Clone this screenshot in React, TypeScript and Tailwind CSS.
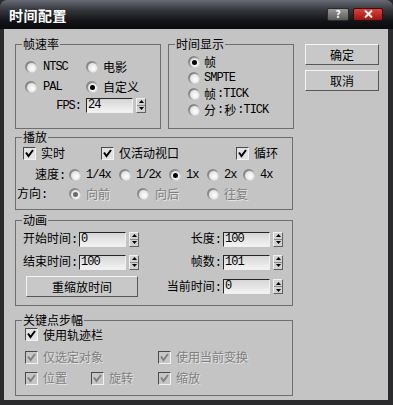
import type { ReactNode } from 'react'

const cjk = "font-['Noto_Sans_CJK_SC',sans-serif]"
const lat = "font-['Liberation_Mono',monospace] text-[12px] tracking-[-1px]"
const dim = 'text-[#7f7f7f] [text-shadow:1px_1px_0_#e4e4e4]'

function Lat({ children }: { children: ReactNode }) {
  return <span className={lat}>{children}</span>
}

function Radio({ on = false, off = false }: { on?: boolean; off?: boolean }) {
  return (
    <span className="flex h-[12px] w-[12px] shrink-0 items-center justify-center rounded-full bg-[linear-gradient(135deg,#6f6f6f,#9a9a9a_45%,#ffffff)]">
      <span className="flex h-[9px] w-[9px] items-center justify-center rounded-full bg-[radial-gradient(circle_at_60%_60%,#ffffff,#d4d4d4)]">
        {on ? <span className={`h-[5px] w-[5px] rounded-full ${off ? 'bg-[#6a6a6a]' : 'bg-black'}`} /> : null}
      </span>
    </span>
  )
}

function Check({ off = false }: { off?: boolean }) {
  return (
    <span
      className={`flex h-[13px] w-[13px] shrink-0 items-center justify-center border border-t-[#4a4a4a] border-l-[#4a4a4a] border-b-[#f2f2f2] border-r-[#f2f2f2] ${
        off ? 'bg-[#c6c6c6]' : 'bg-[#e2e2e2]'
      }`}
    >
      <svg width="9" height="9" viewBox="0 0 9 9">
        <path d="M1 3.5 L3.5 7 L8 1" fill="none" stroke={off ? '#808080' : '#000'} strokeWidth="2" />
      </svg>
    </span>
  )
}

function Field({ value, w }: { value: string; w: string }) {
  return (
    <span
      className={`flex h-[15px] ${w} items-center border border-t-[#262626] border-l-[#262626] border-b-[#efefef] border-r-[#efefef] bg-[linear-gradient(#d6d6d6,#f3f3f3)] pl-[1px] leading-[13px]`}
    >
      <Lat>{value}</Lat>
    </span>
  )
}

function Spin() {
  return (
    <span className="ml-[3px] flex h-[15px] w-[10px] flex-col border border-t-[#f0f0f0] border-l-[#f0f0f0] border-b-[#606060] border-r-[#606060] bg-[#d2d2d2]">
      <span className="flex flex-1 items-center justify-center border-b border-[#8a8a8a]">
        <svg width="5" height="3" viewBox="0 0 5 3">
          <path d="M2.5 0 L5 3 L0 3 Z" fill="#000" />
        </svg>
      </span>
      <span className="flex flex-1 items-center justify-center">
        <svg width="5" height="3" viewBox="0 0 5 3">
          <path d="M0 0 L5 0 L2.5 3 Z" fill="#000" />
        </svg>
      </span>
    </span>
  )
}

function Btn({ children, w }: { children: ReactNode; w: string }) {
  return (
    <span
      className={`flex h-[21px] ${w} items-center justify-center border border-t-[#f4f4f4] border-l-[#f4f4f4] border-b-[#585858] border-r-[#585858] bg-[#c8c8c8]`}
    >
      {children}
    </span>
  )
}

function Group({ title, className, children }: { title: string; className: string; children: ReactNode }) {
  return (
    <fieldset className={`shrink-0 border border-[#6f6f6f] ${className}`}>
      <legend className="ml-[6px] px-[1px] leading-[14px]">{title}</legend>
      {children}
    </fieldset>
  )
}

export default function App() {
  return (
    <div className={`h-[405px] w-[393px] overflow-hidden bg-[#2b2b2e] text-[12px] leading-[14px] text-black ${cjk}`}>
      <div className="flex h-[29px] items-center justify-between rounded-t-[7px] bg-[linear-gradient(#686b73,#34363c_35%,#111215_75%,#0b0b0e)] pl-[9px] pr-[10px]">
        <span className="text-[14px] font-bold tracking-[0.5px] text-white">时间配置</span>
        <div className="flex items-center gap-[4px] pb-[1px]">
          <span className="flex h-[13px] w-[22px] items-center justify-center rounded-[2px] border border-[#2c2c2c] bg-[linear-gradient(#9a9a9a,#5a5a5a)] text-[10px] font-bold leading-none text-white">
            ?
          </span>
          <span className="flex h-[13px] w-[30px] items-center justify-center rounded-[2px] border border-[#3a0a0a] bg-[linear-gradient(#e0413a,#9a1410)]">
            <svg width="9" height="8" viewBox="0 0 9 8">
              <path d="M1 0.5 L8 7.5 M8 0.5 L1 7.5" stroke="#fff" strokeWidth="2" />
            </svg>
          </span>
        </div>
      </div>

      <div className="ml-[4px] h-[371px] w-[384px] bg-[#c4c4c4] pl-[11px] pt-[8px]">
        <div className="flex items-start">
          <Group title="帧速率" className="h-[92px] w-[146px]">
            <div className="pl-[9px] pt-[6px]">
              <div className="flex h-[20px] items-center">
                <span className="flex w-[61px] items-center gap-[6px]">
                  <Radio />
                  <Lat>NTSC</Lat>
                </span>
                <span className="flex items-center gap-[5px]">
                  <Radio />
                  电影
                </span>
              </div>
              <div className="flex h-[20px] items-center">
                <span className="flex w-[61px] items-center gap-[6px]">
                  <Radio />
                  <Lat>PAL</Lat>
                </span>
                <span className="flex items-center gap-[5px]">
                  <Radio on />
                  自定义
                </span>
              </div>
              <div className="flex h-[16px] items-center">
                <span className="w-[61px] pr-[5px] text-right">
                  <Lat>FPS:</Lat>
                </span>
                <Field value="24" w="w-[47px]" />
                <Spin />
              </div>
            </div>
          </Group>

          <Group title="时间显示" className="ml-[7px] h-[92px] w-[126px]">
            <div className="pl-[19px] pt-[3px]">
              <div className="flex h-[16px] items-center gap-[4px]">
                <Radio on />
                帧
              </div>
              <div className="flex h-[16px] items-center gap-[4px]">
                <Radio />
                <Lat>SMPTE</Lat>
              </div>
              <div className="flex h-[16px] items-center gap-[4px]">
                <Radio />
                <span className="flex items-center gap-[1px]">
                  <span>帧</span>
                  <Lat>:TICK</Lat>
                </span>
              </div>
              <div className="flex h-[16px] items-center gap-[4px]">
                <Radio />
                <span className="flex items-center gap-[1px]">
                  <span>分</span>
                  <Lat>:</Lat>
                  <span>秒</span>
                  <Lat>:TICK</Lat>
                </span>
              </div>
            </div>
          </Group>

          <div className="ml-[11px] mt-[7px] flex flex-col gap-[5px]">
            <Btn w="w-[74px]">确定</Btn>
            <Btn w="w-[74px]">取消</Btn>
          </div>
        </div>

        <Group title="播放" className="mt-[1px] h-[80px] w-[278px]">
          <div className="flex h-[18px] items-center pl-[7px]">
            <span className="flex w-[78px] items-center gap-[5px]">
              <Check />
              实时
            </span>
            <span className="flex w-[135px] items-center gap-[5px]">
              <Check />
              仅活动视口
            </span>
            <span className="flex items-center gap-[5px]">
              <Check />
              循环
            </span>
          </div>
          <div className="mt-[3px] flex h-[20px] items-center pl-[19px]">
            <span className="w-[34px]">
              速度<Lat>:</Lat>
            </span>
            <span className="flex w-[50px] items-center gap-[5px]">
              <Radio />
              <Lat>1/4x</Lat>
            </span>
            <span className="flex w-[50px] items-center gap-[5px]">
              <Radio />
              <Lat>1/2x</Lat>
            </span>
            <span className="flex w-[38px] items-center gap-[5px]">
              <Radio on />
              <Lat>1x</Lat>
            </span>
            <span className="flex w-[36px] items-center gap-[5px]">
              <Radio />
              <Lat>2x</Lat>
            </span>
            <span className="flex items-center gap-[5px]">
              <Radio />
              <Lat>4x</Lat>
            </span>
          </div>
          <div className="flex h-[18px] items-center pl-[1px]">
            <span className="w-[52px]">
              方向<Lat>:</Lat>
            </span>
            <span className={`flex w-[68px] items-center gap-[5px] ${dim}`}>
              <Radio on off />
              向前
            </span>
            <span className={`flex w-[70px] items-center gap-[6px] ${dim}`}>
              <Radio />
              向后
            </span>
            <span className={`flex items-center gap-[5px] ${dim}`}>
              <Radio />
              往复
            </span>
          </div>
        </Group>

        <Group title="动画" className="mt-[3px] h-[93px] w-[278px]">
          <div className="pl-[7px] pt-[4px]">
            <div className="flex h-[16px] items-center">
              <span className="w-[56px]">
                开始时间<Lat>:</Lat>
              </span>
              <Field value="0" w="w-[47px]" />
              <Spin />
              <span className="w-[84px] pr-[2px] text-right">
                长度<Lat>:</Lat>
              </span>
              <Field value="100" w="w-[47px]" />
              <Spin />
            </div>
            <div className="mt-[7px] flex h-[16px] items-center">
              <span className="w-[56px]">
                结束时间<Lat>:</Lat>
              </span>
              <Field value="100" w="w-[47px]" />
              <Spin />
              <span className="w-[84px] pr-[2px] text-right">
                帧数<Lat>:</Lat>
              </span>
              <Field value="101" w="w-[47px]" />
              <Spin />
            </div>
            <div className="mt-[6px] flex h-[21px] items-center">
              <span className="ml-[3px]">
                <Btn w="w-[112px]">重缩放时间</Btn>
              </span>
              <span className="w-[85px] pr-[2px] text-right">
                当前时间<Lat>:</Lat>
              </span>
              <Field value="0" w="w-[47px]" />
              <Spin />
            </div>
          </div>
        </Group>

        <Group title="关键点步幅" className="mt-[7px] h-[83px] w-[278px]">
          <div className="pl-[9px]">
            <div className="flex h-[15px] items-center gap-[5px]">
              <Check />
              使用轨迹栏
            </div>
            <div className={`mt-[7px] flex h-[16px] items-center ${dim}`}>
              <span className="flex w-[133px] items-center gap-[5px]">
                <Check off />
                仅选定对象
              </span>
              <span className="flex items-center gap-[5px]">
                <Check off />
                使用当前变换
              </span>
            </div>
            <div className={`mt-[5px] flex h-[16px] items-center ${dim}`}>
              <span className="flex w-[66px] items-center gap-[5px]">
                <Check off />
                位置
              </span>
              <span className="flex w-[67px] items-center gap-[5px]">
                <Check off />
                旋转
              </span>
              <span className="flex items-center gap-[5px]">
                <Check off />
                缩放
              </span>
            </div>
          </div>
        </Group>
      </div>
    </div>
  )
}
